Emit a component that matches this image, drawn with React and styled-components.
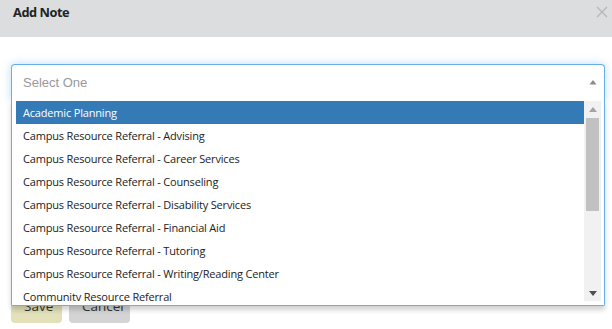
import React from "react";
import styled, { createGlobalStyle } from "styled-components";

const Global = createGlobalStyle`
  html, body { margin: 0; padding: 0; background: #fff; }
  body { font-family: "Open Sans", "Noto Sans", sans-serif; color: #333; }
  * { box-sizing: border-box; }
`;

const Header = styled.div`
  height: 37px;
  background: #dcdddf;
  display: flex;
  justify-content: space-between;
  align-items: flex-start;
  padding: 3px 2px 0 13px;
`;

const Title = styled.h4`
  margin: 0;
  font-family: "Open Sans", sans-serif;
  font-weight: 700;
  font-size: 12.8px;
  line-height: 18px;
  color: #222;
  letter-spacing: -0.45px;
`;

const Close = styled.button`
  border: 0;
  background: transparent;
  padding: 0;
  margin-top: 3px;
  width: 14px;
  height: 14px;
  display: flex;
`;

const Body = styled.div`
  padding: 27px 7px 0 11px;
`;

const SelectWrap = styled.div`
  position: relative;
  height: 37px;
  border: 1px solid #66afe9;
  border-bottom: 0;
  border-radius: 4px 4px 0 0;
  box-shadow: 0 0 8px rgba(102, 175, 233, 0.45);
  background: #fff;
  display: flex;
  align-items: center;
  justify-content: space-between;
  padding: 0 7px 2px 11px;
  z-index: 2;
`;

const Placeholder = styled.span`
  font-family: "Liberation Sans", Arial, sans-serif;
  font-size: 13px;
  color: #999;
`;

const Drop = styled.div`
  position: absolute;
  top: 100%;
  left: -1px;
  right: -1px;
  background: #fff;
  border: 1px solid #66afe9;
  border-top: 0;
  border-radius: 0 0 2px 2px;
  box-shadow: 0 4px 5px rgba(0, 0, 0, 0.18);
  display: flex;
  padding: 0 3px 4px 4px;
`;

const Results = styled.ul`
  list-style: none;
  margin: 0;
  padding: 0;
  flex: 1;
  height: 200px;
  overflow: hidden;
`;

const Option = styled.li`
  padding: 5px 7px;
  font-size: 11px;
  line-height: 13px;
  height: 23px;
  white-space: nowrap;
  color: ${(p) => (p.$active ? "#fff" : "#222")};
  background: ${(p) => (p.$active ? "#337ab7" : "transparent")};
  letter-spacing: -0.18px;
`;

const ScrollBar = styled.div`
  width: 17px;
  height: 200px;
  background: #f1f1f1;
  display: flex;
  flex-direction: column;
  align-items: center;
`;

const ScrollArrow = styled.div`
  height: 16px;
  width: 17px;
  display: flex;
  align-items: center;
  justify-content: center;
`;

const Thumb = styled.div`
  width: 13px;
  height: 93px;
  background: #c1c1c1;
  margin-top: 1px;
`;

const Spacer = styled.div`
  flex: 1;
`;

const NoteArea = styled.textarea`
  display: block;
  width: 100%;
  height: 158px;
  margin: 15px 0;
  border: 1px solid #ccc;
  border-radius: 4px;
  resize: none;
`;

const Buttons = styled.div`
  display: flex;
  gap: 7px;
`;

const Btn = styled.button`
  height: 34px;
  padding: 6px 12px;
  font-family: "Open Sans", sans-serif;
  font-size: 13.5px;
  line-height: 20px;
  border: 1px solid transparent;
  border-radius: 4px;
  color: #333;
  background: ${(p) => (p.$primary ? "#e2e1b9" : "#d4d4d4")};
  width: ${(p) => p.$w}px;
`;

const options = [
  "Academic Planning",
  "Campus Resource Referral - Advising",
  "Campus Resource Referral - Career Services",
  "Campus Resource Referral - Counseling",
  "Campus Resource Referral - Disability Services",
  "Campus Resource Referral - Financial Aid",
  "Campus Resource Referral - Tutoring",
  "Campus Resource Referral - Writing/Reading Center",
  "Community Resource Referral",
];

export default function App() {
  return (
    <>
      <Global />
      <Header>
        <Title>Add Note</Title>
        <Close aria-label="close">
          <svg width="12" height="12" viewBox="0 0 12 12">
            <path d="M1 1 L11 11 M11 1 L1 11" stroke="#b5b6b8" strokeWidth="1.2" />
          </svg>
        </Close>
      </Header>
      <Body>
        <SelectWrap>
          <Placeholder>Select One</Placeholder>
          <svg width="8" height="6" viewBox="0 0 8 6">
            <path d="M0.5 5.5 L4 1 L7.5 5.5 Z" fill="#8a8a8a" />
          </svg>
          <Drop>
            <Results>
              {options.map((o, i) => (
                <Option key={o} $active={i === 0}>
                  {o}
                </Option>
              ))}
            </Results>
            <ScrollBar>
              <ScrollArrow>
                <svg width="8" height="5" viewBox="0 0 8 5">
                  <path d="M0 5 L4 0 L8 5 Z" fill="#a3a3a3" />
                </svg>
              </ScrollArrow>
              <Thumb />
              <Spacer />
              <ScrollArrow>
                <svg width="8" height="5" viewBox="0 0 8 5">
                  <path d="M0 0 L8 0 L4 5 Z" fill="#505050" />
                </svg>
              </ScrollArrow>
            </ScrollBar>
          </Drop>
        </SelectWrap>
        <NoteArea />
        <Buttons>
          <Btn $primary $w={51}>Save</Btn>
          <Btn $w={61}>Cancel</Btn>
        </Buttons>
      </Body>
    </>
  );
}
